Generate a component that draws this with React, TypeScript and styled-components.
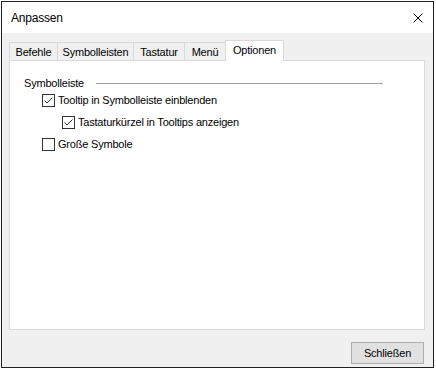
import React from 'react';
import styled, { createGlobalStyle } from 'styled-components';

const GlobalStyle = createGlobalStyle`
	html, body {
		margin: 0;
		padding: 0;
		background: #ffffff;
	}
	body {
		font-family: 'Liberation Sans', Arial, sans-serif;
		font-size: 11px;
		letter-spacing: -0.2px;
		color: #000000;
	}
`;

const Page = styled.div`
	width: 436px;
	height: 370px;
	padding: 1px 0 0 1px;
	box-sizing: border-box;
`;

const Dialog = styled.div`
	width: 433px;
	height: 367px;
	box-sizing: border-box;
	border: 1px solid #1f1f1f;
	background: #f0f0f0;
	display: flex;
	flex-direction: column;
`;

const TitleBar = styled.div`
	height: 31px;
	flex: none;
	background: #ffffff;
	display: flex;
	align-items: center;
	justify-content: space-between;
	padding: 0 10px 0 9px;
	font-size: 12px;
`;

const CloseButton = styled.div`
	width: 10px;
	height: 10px;
	display: flex;
`;

const Body = styled.div`
	flex: 1;
	display: flex;
	flex-direction: column;
	padding: 7px 8px 3px 7px;
`;

const TabRow = styled.div`
	height: 21px;
	display: flex;
	align-items: flex-end;
	margin-bottom: -1px;
	position: relative;
	z-index: 1;
`;

const Tab = styled.div<{ $width: number; $active?: boolean }>`
	width: ${(p) => p.$width}px;
	box-sizing: border-box;
	height: ${(p) => (p.$active ? 21 : 18)}px;
	margin-bottom: ${(p) => (p.$active ? 0 : 1)}px;
	margin-left: -1px;
	border: 1px solid #d9d9d9;
	border-bottom: none;
	background: ${(p) => (p.$active ? '#ffffff' : '#f0f0f0')};
	display: flex;
	justify-content: center;
	padding-top: ${(p) => (p.$active ? 3 : 3)}px;
	&:first-child {
		margin-left: 0;
	}
`;

const Panel = styled.div`
	height: 270px;
	box-sizing: border-box;
	border: 1px solid #d9d9d9;
	background: #ffffff;
	padding: 15px 0 0 14px;
	display: flex;
	flex-direction: column;
`;

const GroupHeader = styled.div`
	height: 13px;
	display: flex;
	align-items: center;
`;

const GroupLine = styled.div`
	flex: 1;
	height: 1px;
	background: #a0a0a0;
	margin: 1px 41px 0 12px;
`;

const CheckRow = styled.label<{ $indent: number }>`
	height: 22px;
	display: flex;
	align-items: center;
	padding-left: ${(p) => p.$indent}px;
	gap: 3px;
`;

const Box = styled.span`
	width: 13px;
	height: 13px;
	box-sizing: border-box;
	border: 1px solid #333333;
	background: #ffffff;
	display: flex;
`;

const Footer = styled.div`
	margin-top: 12px;
	display: flex;
	justify-content: flex-end;
	padding-right: 1px;
`;

const Button = styled.div`
	width: 73px;
	height: 22px;
	box-sizing: border-box;
	border: 1px solid #adadad;
	background: #e1e1e1;
	display: flex;
	align-items: center;
	justify-content: center;
`;

const Checkbox = ({ checked }: { checked: boolean }) => (
	<Box>
		{checked && (
			<svg width="11" height="11" viewBox="0 0 11 11">
				<polyline points="1.5,5.5 4,8 9.5,2.5" fill="none" stroke="#333333" strokeWidth="1" />
			</svg>
		)}
	</Box>
);

const tabs = [
	{ label: 'Befehle', width: 49 },
	{ label: 'Symbolleisten', width: 77 },
	{ label: 'Tastatur', width: 52 },
	{ label: 'Menü', width: 42 },
	{ label: 'Optionen', width: 59, active: true },
];

const options = [
	{ label: 'Tooltip in Symbolleiste einblenden', checked: true, indent: 18 },
	{ label: 'Tastaturkürzel in Tooltips anzeigen', checked: true, indent: 38 },
	{ label: 'Große Symbole', checked: false, indent: 18 },
];

const App = () => {
	return (
		<React.Fragment>
			<GlobalStyle />
			<Page>
				<Dialog>
					<TitleBar>
						<span>Anpassen</span>
						<CloseButton>
							<svg width="10" height="10" viewBox="0 0 10 10">
								<path d="M0.5 0.5 L9.5 9.5 M9.5 0.5 L0.5 9.5" stroke="#000000" strokeWidth="1" />
							</svg>
						</CloseButton>
					</TitleBar>
					<Body>
						<TabRow>
							{tabs.map((t) => (
								<Tab key={t.label} $width={t.width} $active={t.active}>
									{t.label}
								</Tab>
							))}
						</TabRow>
						<Panel>
							<GroupHeader>
								<span>Symbolleiste</span>
								<GroupLine />
							</GroupHeader>
							{options.map((o) => (
								<CheckRow key={o.label} $indent={o.indent}>
									<Checkbox checked={o.checked} />
									<span>{o.label}</span>
								</CheckRow>
							))}
						</Panel>
						<Footer>
							<Button>Schließen</Button>
						</Footer>
					</Body>
				</Dialog>
			</Page>
		</React.Fragment>
	);
};

export default App;
